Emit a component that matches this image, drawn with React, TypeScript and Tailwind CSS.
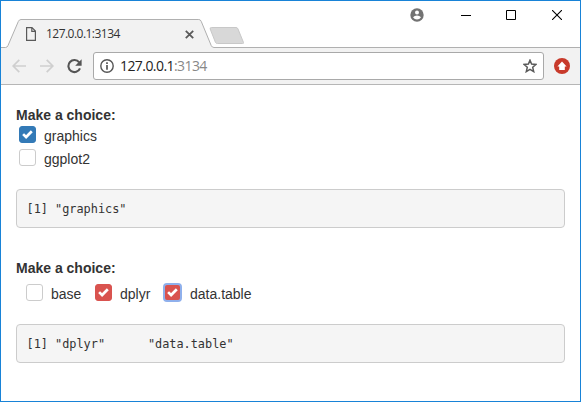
import React from "react";

type Tone = "primary" | "danger" | "none";

function Check({ label, tone, focus, labelClass }: { label: string; tone: Tone; focus?: boolean; labelClass: string }) {
  const box =
    tone === "primary"
      ? "bg-[#337ab7] border-[#337ab7]"
      : tone === "danger"
        ? "bg-[#d9534f] border-[#d9534f]"
        : "bg-white border-[#cccccc]";
  return (
    <label className="flex h-[23px] items-start">
      <span
        className={`flex h-[17px] w-[17px] shrink-0 items-center justify-center rounded-[3px] border ${box} ${
          focus ? "outline-2 -outline-offset-1 outline-[#8fb0ec]" : ""
        }`}
      >
        {tone !== "none" && (
          <svg width="11" height="9" viewBox="0 0 11 9" className="-mt-px">
            <path d="M1.1 4.1 4.1 7 9.8 1.3" fill="none" stroke="white" strokeWidth="2.7" />
          </svg>
        )}
      </span>
      <span className={`text-[14px] leading-5 whitespace-nowrap ${labelClass}`}>{label}</span>
    </label>
  );
}

function Output({ children }: { children: string }) {
  return (
    <pre className="h-[39px] rounded-[4px] border border-[#cccccc] bg-[#f5f5f5] pt-[10px] pl-[9.5px] font-['DejaVu_Sans_Mono',monospace] text-[11.875px] leading-[19px] text-[#333333]">
      {children}
    </pre>
  );
}

function TabStrip() {
  return (
    <div className="flex h-[47px] items-end">
      <svg width="20" height="29" className="shrink-0">
        <path d="M0 28.5H4.5Q6.3 28.5 7 26.5L17.3 2.5Q18.2.5 20 .5V29H0Z" fill="#f2f2f2" />
        <path d="M0 28.5H4.5Q6.3 28.5 7 26.5L17.3 2.5Q18.2.5 20 .5" fill="none" stroke="#b0b0b0" />
      </svg>
      <div className="flex h-[29px] w-[177px] items-center border-t border-[#b0b0b0] bg-[#f2f2f2]">
        <svg width="10" height="14" viewBox="0 0 10 14" className="ml-[5px] shrink-0" fill="none" stroke="#5a5a5a" strokeWidth="1.2">
          <path d="M.6.6H6L9.4 4V13.4H.6ZM5.8.8V4.3H9.3" />
        </svg>
        <span className="ml-[10px] w-[139px] font-['Open_Sans',sans-serif] text-[12px] leading-4 tracking-[-0.53px] text-[#333333]">
          127.0.0.1:3134
        </span>
        <svg width="9" height="9" viewBox="0 0 9 9" className="shrink-0" stroke="#5a5a5a" strokeWidth="1.8">
          <path d="M.8.8 8.2 8.2M8.2.8.8 8.2" />
        </svg>
      </div>
      <svg width="49" height="29" className="shrink-0">
        <path d="M0 .5H.8Q2.4.5 3.2 2.3L13.2 26.5Q14 28.5 15 28.5V29H0Z" fill="#f2f2f2" />
        <path d="M0 .5H.8Q2.4.5 3.2 2.3L13.2 26.5Q14 28.5 16 28.5H49" fill="none" stroke="#b0b0b0" />
        <path d="M13.5 8.5H38Q39.5 8.5 40 10L45.5 23.5Q46 24.5 44.5 24.5H19.5Q18 24.5 17.5 23.5L12.2 10Q11.7 8.5 13.5 8.5Z" fill="#d8d8d8" stroke="#c8c8c8" />
      </svg>
      <div className="flex h-[47px] flex-1 items-start border-b border-[#b0b0b0]">
        <svg width="14" height="14" viewBox="0 0 14 14" className="mt-[7px] ml-[163px] shrink-0">
          <circle cx="7" cy="7" r="6.7" fill="#737373" />
          <circle cx="7" cy="4.6" r="2" fill="white" />
          <path d="M3 9.2Q4.5 7.4 7 7.4T11 9.2Q9.5 11.5 7 11.5T3 9.2Z" fill="white" />
        </svg>
        <svg width="10" height="1" className="mt-[14px] ml-[37px] shrink-0"><path d="M0 .5H10" stroke="black" /></svg>
        <svg width="10" height="10" className="mt-[9px] ml-[35px] shrink-0"><path d="M.5.5H9.5V9.5H.5Z" fill="none" stroke="black" /></svg>
        <svg width="10" height="10" className="mt-[9px] ml-[36px] shrink-0"><path d="M0 0 10 10M10 0 0 10" stroke="black" strokeWidth="1.1" /></svg>
      </div>
    </div>
  );
}

function Toolbar() {
  return (
    <div className="flex h-[37px] items-center border-b border-[#b6b6b6] bg-[#f2f2f2]">
      <svg width="14" height="14" viewBox="0 0 14 14" className="ml-[11px] shrink-0" fill="none" stroke="#cfcfcf" strokeWidth="1.7">
        <path d="M14 7H1.5M7.3.8 1.2 7 7.3 13.2" />
      </svg>
      <svg width="14" height="14" viewBox="0 0 14 14" className="ml-[14px] shrink-0" fill="none" stroke="#cfcfcf" strokeWidth="1.7">
        <path d="M0 7H12.5M6.7.8 12.8 7 6.7 13.2" />
      </svg>
      <svg width="15" height="15" viewBox="0 0 15 15" className="ml-[13px] shrink-0">
        <path d="M12.2 3.4A6 6 0 1 0 13 9.3" fill="none" stroke="#555555" strokeWidth="2.1" />
        <path d="M14.6.3V6.8H8.2Z" fill="#555555" />
      </svg>
      <div className="ml-[11px] flex h-[28px] w-[451px] items-center rounded-[3px] border border-[#a9a9a9] bg-white">
        <svg width="14" height="14" viewBox="0 0 14 14" className="ml-[6px] shrink-0" fill="none" stroke="#555555">
          <circle cx="7" cy="7" r="6.2" strokeWidth="1.4" />
          <path d="M7 6V10.8M7 3.2V4.9" strokeWidth="1.7" />
        </svg>
        <span className="ml-[6px] flex-1 font-['Open_Sans',sans-serif] text-[14px] leading-5 tracking-[-0.57px] text-[#222222]">
          127.0.0.1<span className="text-[#888888]">:3134</span>
        </span>
        <svg width="14" height="14" viewBox="0 0 14 14" className="mr-[6px] shrink-0" fill="none" stroke="#5a5a5a" strokeWidth="1.5">
          <path d="M7 1.2 8.6 5.1 12.9 5.5 9.7 8.3 10.7 12.6 7 10.3 3.3 12.6 4.3 8.3 1.1 5.5 5.4 5.1Z" />
        </svg>
      </div>
      <svg width="16" height="16" viewBox="0 0 16 16" className="ml-[10px] shrink-0">
        <circle cx="8" cy="8" r="8" fill="#c83a2b" />
        <path d="M8 3.5 12.6 8.5H10.8V12H5.2V8.5H3.4Z" fill="white" />
      </svg>
    </div>
  );
}

export default function App() {
  return (
    <div className="h-[402px] w-[581px] overflow-hidden border border-[#1883d7] bg-white font-['Liberation_Sans',Arial,sans-serif] text-[#333333]">
      <TabStrip />
      <Toolbar />
      <main className="pt-[20px] pr-[15px] pl-[15px]">
        <h2 className="text-[14px] leading-5 font-bold">Make a choice:</h2>
        <div className="mt-px ml-[3px] h-[63px]">
          <Check label="graphics" tone="primary" labelClass="ml-[8px]" />
          <Check label="ggplot2" tone="none" labelClass="ml-[8px]" />
        </div>
        <Output>{'[1] "graphics"'}</Output>
        <h2 className="mt-[30px] text-[14px] leading-5 font-bold">Make a choice:</h2>
        <div className="mt-[6px] ml-[10px] flex h-[40px]">
          <Check label="base" tone="none" labelClass="ml-[8px] w-[44px]" />
          <Check label="dplyr" tone="danger" labelClass="ml-[8px] w-[44px]" />
          <Check label="data.table" tone="danger" focus labelClass="ml-[9px]" />
        </div>
        <Output>{'[1] "dplyr"      "data.table"'}</Output>
      </main>
    </div>
  );
}
